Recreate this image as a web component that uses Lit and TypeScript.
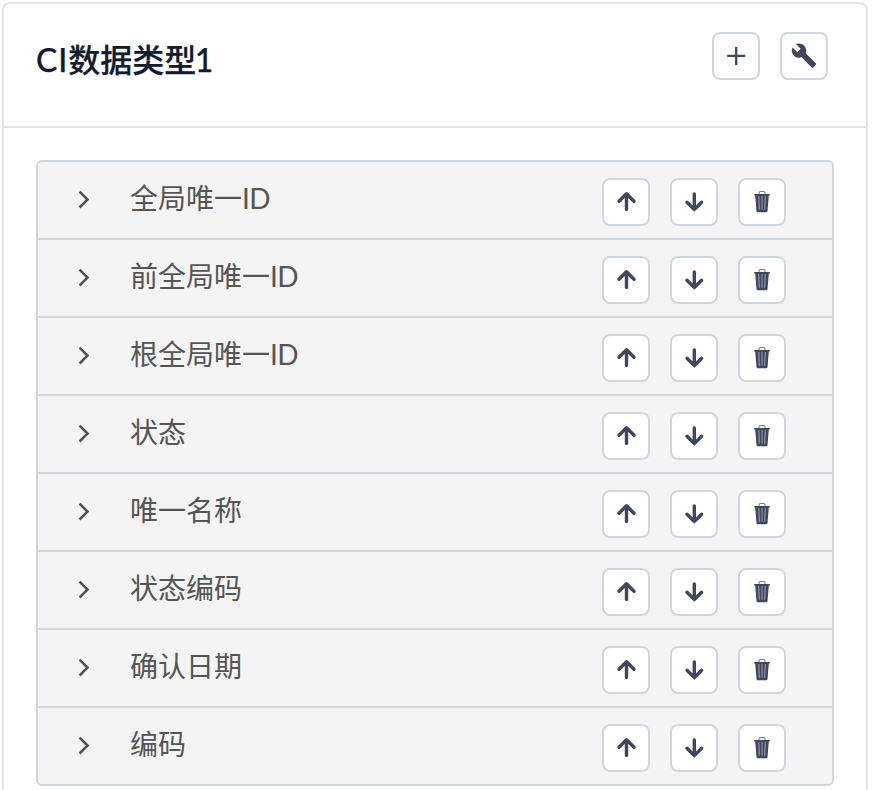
import { LitElement, html, css, svg } from "lit";
import { customElement, property } from "lit/decorators.js";

const icons: Record<string, unknown> = {
  plus: svg`<path d="M24.2 14.9v18M15.2 23.9h18" fill="none" stroke="currentColor" stroke-width="2.3"/>`,
  wrench: svg`<path transform="translate(10.7 10.2) scale(1.11)" fill="currentColor" d="M22.7 19l-9.1-9.1c.9-2.3.4-5-1.5-6.9-2-2-5-2.4-7.4-1.3L9 6 6 9 1.6 4.7C.4 7.1.9 10.1 2.9 12.1c1.9 1.9 4.6 2.4 6.9 1.5l9.1 9.1c.4.4 1 .4 1.4 0l2.3-2.3c.5-.4.5-1.1.1-1.4z"/>`,
  up: svg`<path d="M24.5 31.4V16M17 23.2l7.5-7.4 7.5 7.4" fill="none" stroke="currentColor" stroke-width="3.4" stroke-linecap="round" stroke-linejoin="round"/>`,
  down: svg`<path d="M24.3 16V31.4M17 24.3l7.3 7.3 7.3-7.3" fill="none" stroke="currentColor" stroke-width="3.4" stroke-linecap="round" stroke-linejoin="round"/>`,
  trash: svg`<path d="M20.9 16v-.7a1.8 1.8 0 0 1 1.8-1.8h2.6a1.8 1.8 0 0 1 1.8 1.8v.7" fill="none" stroke="#737889" stroke-width="1.1"/>
    <path d="M16.2 15.9h15.6v1.6h-1l-1.3 15.4q-.1 1.3-1.2 1.3h-8.6q-1.1 0-1.2-1.3l-1.3-15.4h-1z" fill="currentColor"/>
    <path d="M20.7 18l.7 13.8M24 18v13.8M27.3 18l-.7 13.8" fill="none" stroke="#9094a2" stroke-width="1.2"/>`,
};

@customElement("icon-button")
export class IconButton extends LitElement {
  @property() icon = "plus";
  @property() label = "";

  static styles = css`
    :host { display: block; }
    .button {
      display: block;
      box-sizing: border-box;
      width: 48px;
      height: 48px;
      padding: 0;
      border: 2px solid #d2d5db;
      border-radius: 8px;
      background: #fff;
      color: #40475c;
    }
    .glyph { display: block; width: 48px; height: 48px; margin: -2px; }
  `;

  render() {
    return html`<button class="button" aria-label=${this.label}>
      <svg class="glyph" viewBox="0 0 48 48">${icons[this.icon]}</svg>
    </button>`;
  }
}

@customElement("app-root")
export class AppRoot extends LitElement {
  private fields = [
    { name: "全局唯一", suffix: "ID" },
    { name: "前全局唯一", suffix: "ID" },
    { name: "根全局唯一", suffix: "ID" },
    { name: "状态", suffix: "" },
    { name: "唯一名称", suffix: "" },
    { name: "状态编码", suffix: "" },
    { name: "确认日期", suffix: "" },
    { name: "编码", suffix: "" },
  ];

  static styles = css`
    :host {
      display: block;
      box-sizing: border-box;
      height: 790px;
      padding: 2px 4px 0 2px;
      overflow: hidden;
      background: #fff;
      font-family: Lato, "Noto Sans CJK SC", sans-serif;
    }
    .card {
      box-sizing: border-box;
      height: 830px;
      border: 2px solid #e3e4e9;
      border-radius: 8px;
    }
    .header {
      display: flex;
      justify-content: space-between;
      box-sizing: border-box;
      height: 124px;
      padding: 28px 38px 0 32px;
      border-bottom: 2px solid #e0e2e7;
    }
    .title {
      margin: 4px 0 0;
      font-size: 32px;
      font-weight: 500;
      line-height: 48px;
      color: #131b31;
      -webkit-text-stroke: 0.25px #131b31;
    }
    .prefix { letter-spacing: 0.9px; }
    .number { margin-left: -1.5px; }
    .actions { display: flex; gap: 20px; }
    .list {
      margin: 32px 32px 0;
      border: 2px solid #d2d5db;
      border-radius: 6px;
      background: #f4f4f4;
      overflow: hidden;
    }
    .row {
      display: flex;
      align-items: flex-start;
      height: 76px;
      padding-right: 46px;
    }
    .row + .row { border-top: 2px solid #d2d5db; }
    .chevron { width: 16px; height: 24px; margin: 26px 0 0 38px; color: #505050; }
    .name {
      flex: 1;
      margin: 15px 0 0 38px;
      font-size: 28px;
      line-height: 42px;
      color: #555;
    }
    .suffix { letter-spacing: -0.6px; }
    .row .actions { margin-top: 16px; }
  `;

  render() {
    return html`<section class="card">
      <header class="header">
        <h1 class="title"><span class="prefix">CI</span>数据类型<span class="number">1</span></h1>
        <div class="actions">
          <icon-button icon="plus" label="新增"></icon-button>
          <icon-button icon="wrench" label="配置"></icon-button>
        </div>
      </header>
      <div class="list">
        ${this.fields.map(
          (field) => html`<div class="row">
            <svg class="chevron" viewBox="0 0 16 24">
              <path d="M3.6 3.7l7.9 7.9-7.9 7.9" fill="none" stroke="currentColor" stroke-width="2.5" />
            </svg>
            <span class="name">${field.name}<span class="suffix">${field.suffix}</span></span>
            <div class="actions">
              <icon-button icon="up" label="上移"></icon-button>
              <icon-button icon="down" label="下移"></icon-button>
              <icon-button icon="trash" label="删除"></icon-button>
            </div>
          </div>`,
        )}
      </div>
    </section>`;
  }
}
